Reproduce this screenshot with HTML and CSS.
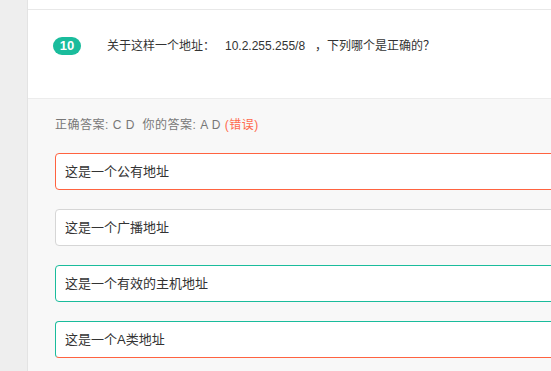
FILE: index.html
```html
<!DOCTYPE html>
<html lang="zh-CN">
<head>
    <meta charset="UTF-8">
    <meta name="viewport" content="width=device-width, initial-scale=1.0">
    <title>答题解析</title>
    <link rel="stylesheet" href="styles.css">
</head>
<body>
    <div class="page">
        <div class="sidebar"></div>
        <div class="main">
            <div class="prev-card"></div>

            <div class="question">
                <span class="num">10</span>
                <span class="title">关于这样一个地址：&nbsp;&nbsp; 10.2.255.255/8 &nbsp;&nbsp;，下列哪个是正确的？</span>
            </div>

            <div class="answers">
                <p class="result">正确答案: C D &nbsp;你的答案: A D <span class="wrong">(错误)</span></p>

                <div class="option picked">这是一个公有地址</div>
                <div class="option">这是一个广播地址</div>
                <div class="option right">这是一个有效的主机地址</div>
                <div class="option right picked-bottom">这是一个A类地址</div>
            </div>
        </div>
    </div>
</body>
</html>
```

FILE: styles.css
```css
html, body {
    margin: 0;
    padding: 0;
    overflow: hidden;
}
body {
    font-family: "Liberation Sans", Arial, "Noto Sans CJK SC", sans-serif;
    background-color: #f8f8f8;
    color: #333;
}
.page {
    display: flex;
    min-height: 371px;
}
.sidebar {
    width: 27px;
    flex-shrink: 0;
    background-color: #eeeeee;
}
.main {
    flex: 1;
    border-left: 1px solid #e3e3e3;
    background-color: #f8f8f8;
}
.prev-card {
    height: 9px;
    background: white;
    border-bottom: 1px solid #e8e8e8;
}
.question {
    height: 89px;
    box-sizing: border-box;
    background: white;
    border-bottom: 1px solid #ececec;
    padding: 27px 0 0 25px;
    display: flex;
    align-items: flex-start;
}
.num {
    display: inline-block;
    width: 28px;
    height: 18px;
    line-height: 18px;
    border-radius: 9px;
    background-color: #1abc9c;
    color: white;
    font-size: 13px;
    font-weight: bold;
    text-align: center;
}
.title {
    margin-left: 26px;
    font-size: 12px;
    line-height: 18px;
    color: #333;
}
.answers {
    padding: 16px 0 0 27px;
}
.result {
    margin: 0 0 18px;
    font-size: 12px;
    line-height: 20px;
    color: #777;
    letter-spacing: 0.5px;
}
.wrong {
    color: #ff6a4d;
}
.option {
    margin-right: -30px;
    margin-bottom: 19px;
    padding-left: 9px;
    height: 35px;
    line-height: 35px;
    background: white;
    border: 1px solid #d6d6d6;
    border-radius: 4px;
    font-size: 13px;
    color: #333;
}
.option.picked {
    border-color: #ff6340;
}
.option.right {
    border-color: #1abc9c;
}
.option.picked-bottom {
    border-bottom-color: #ff6340;
}
```
